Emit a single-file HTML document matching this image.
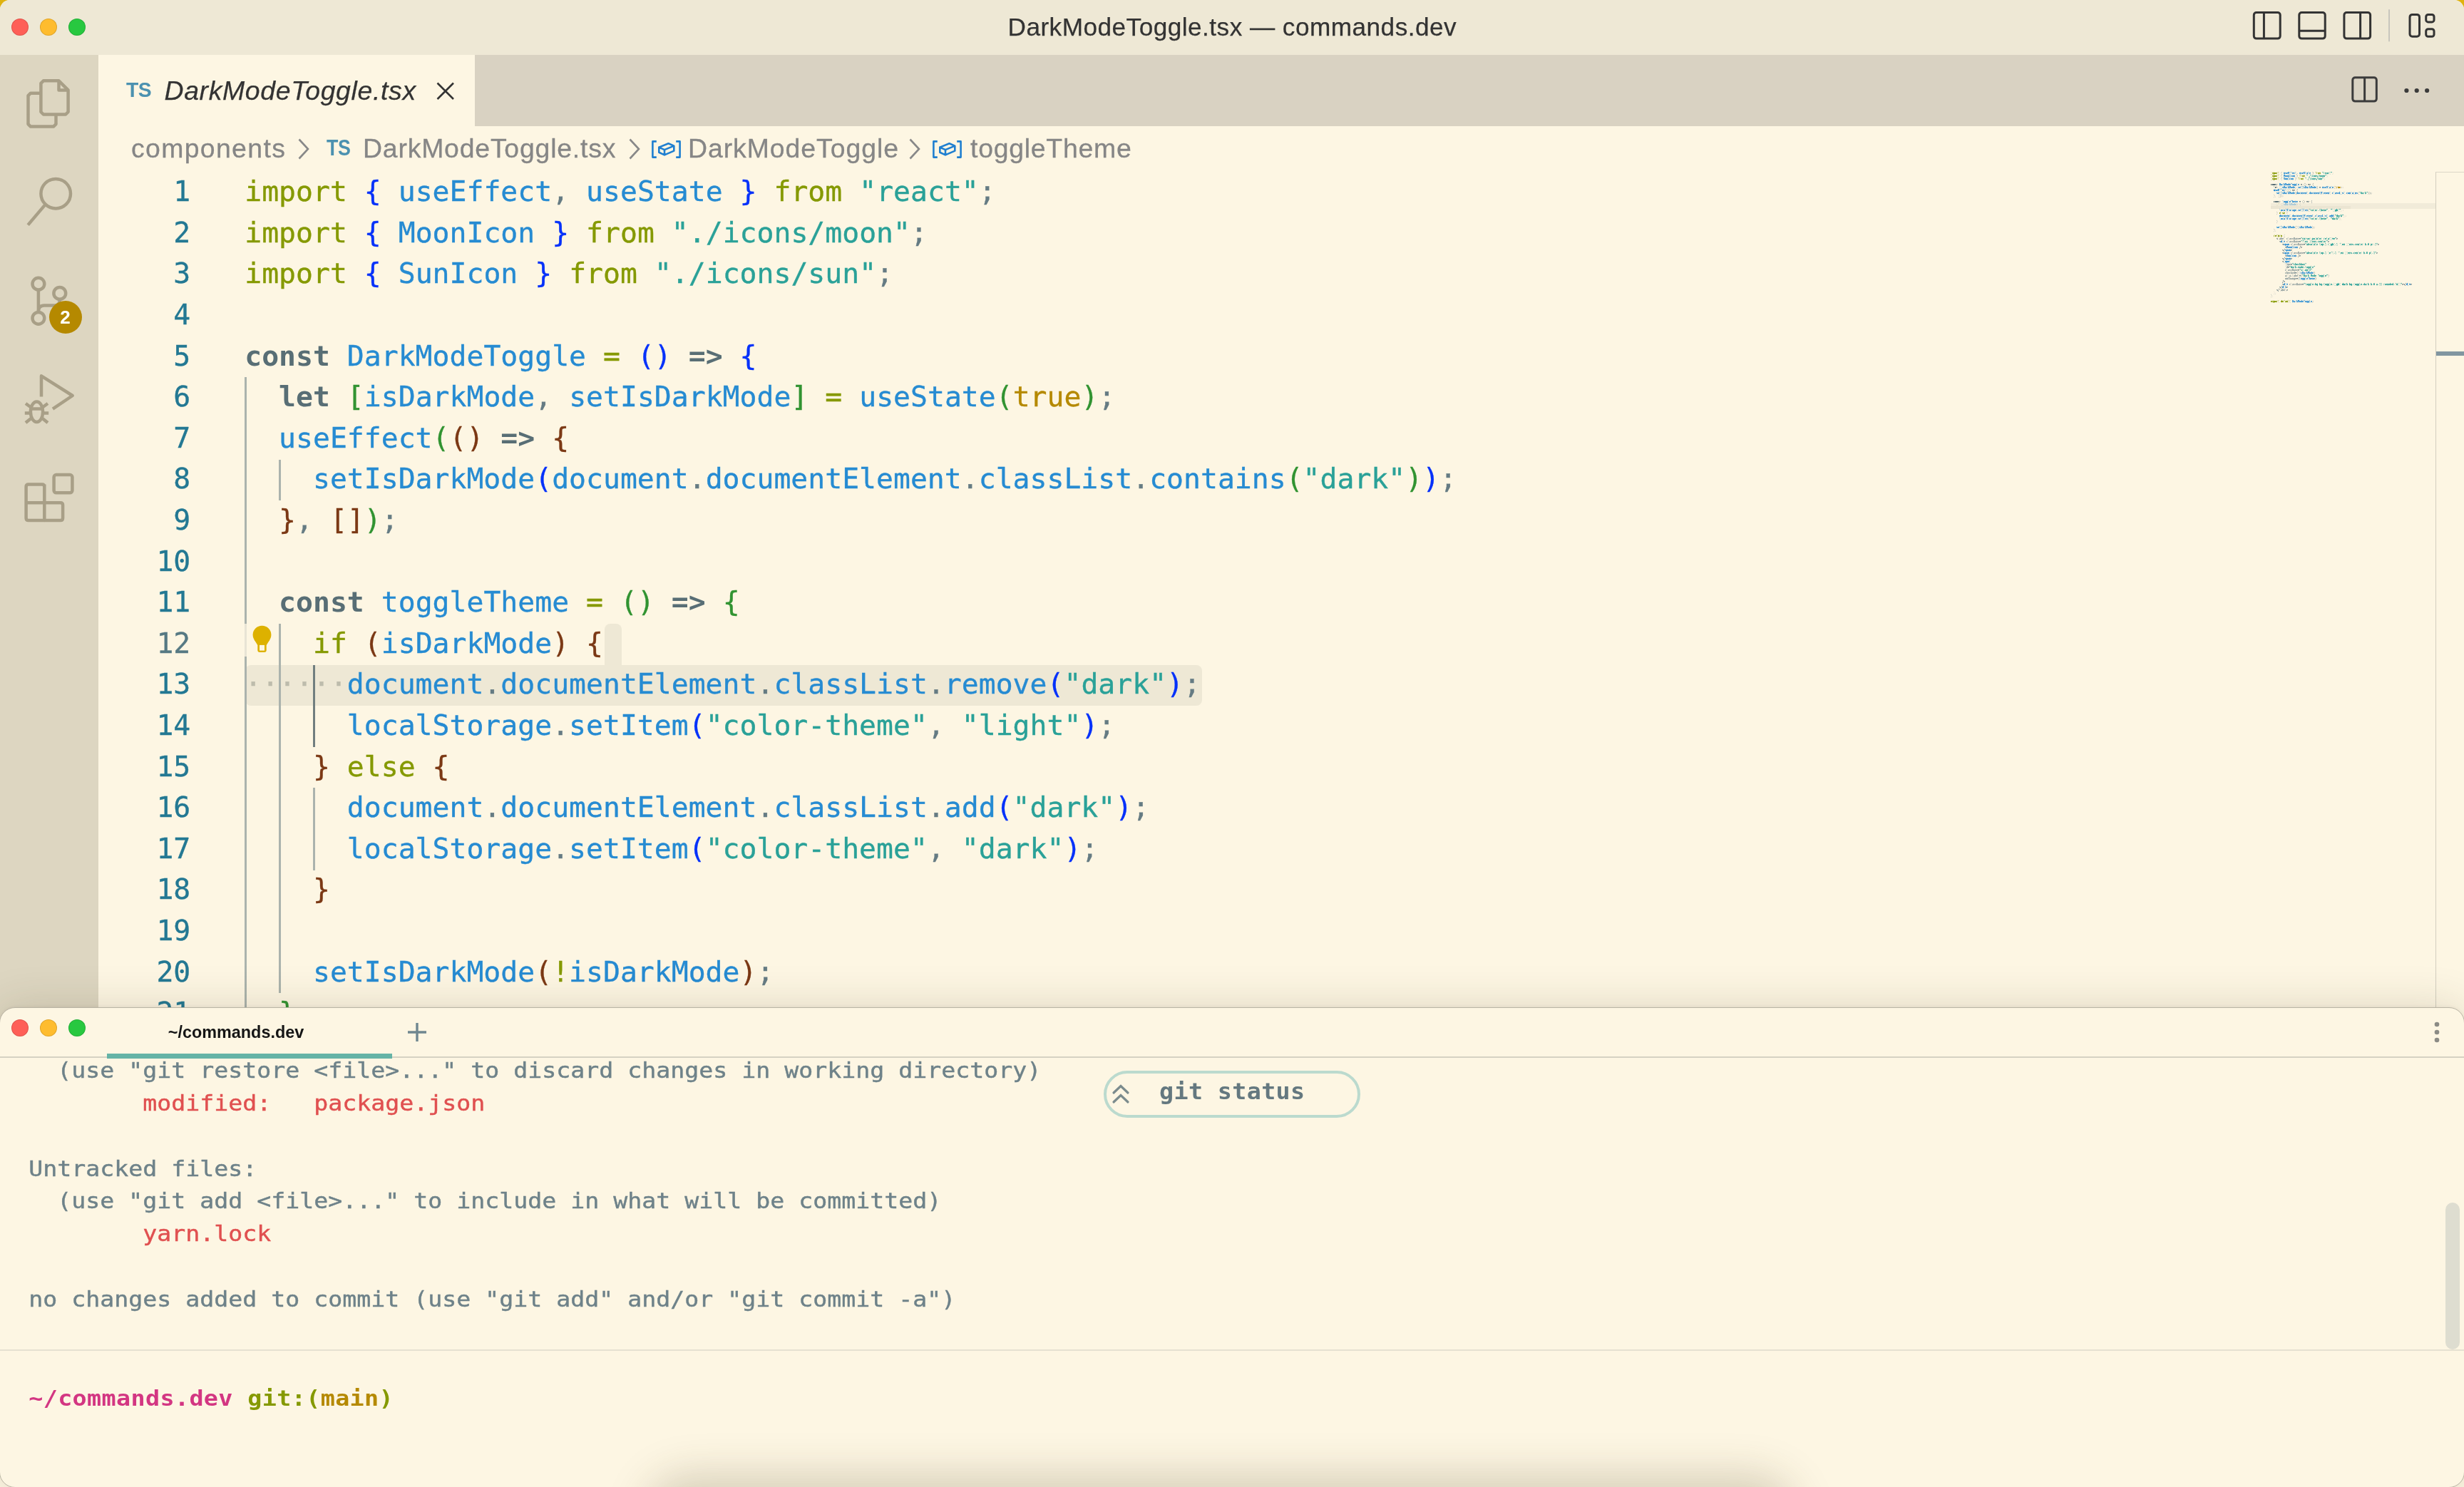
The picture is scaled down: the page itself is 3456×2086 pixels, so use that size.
<!DOCTYPE html>
<html lang="en">
<head>
<meta charset="utf-8">
<title>DarkModeToggle.tsx — commands.dev</title>
<style>
*{box-sizing:border-box;margin:0;padding:0}
html,body{width:3456px;height:2086px;overflow:hidden;background:#b8920f}
body{background:linear-gradient(#dfb20f,#dfb20f 200px,#b8920f 1800px)}
body{position:relative;font-family:"Liberation Sans",sans-serif;color:#333}
.abs{position:absolute}
#root{position:absolute;left:0;top:0;width:3456px;height:2086px;overflow:hidden;will-change:transform}
#vsc{position:absolute;left:0;top:0;width:3456px;height:2086px;background:#fdf6e3;border-radius:14px 14px 0 0;overflow:hidden}
#titlebar{position:absolute;left:0;top:0;width:100%;height:77px;background:#eee8d5}
#title{position:absolute;left:1413.5px;top:0;height:77px;line-height:75px;font-size:35.2px;color:#333;letter-spacing:0.47px;white-space:pre;-webkit-text-stroke:.25px #333}
.tl-dot{position:absolute;width:24px;height:24px;border-radius:50%}
#activity{position:absolute;left:0;top:77px;width:138px;height:1400px;background:#ddd6c1}
#tabs{position:absolute;left:138px;top:77px;right:0;height:100px;background:#d9d2c2}
#tab{position:absolute;left:0;top:0;width:528px;height:100px;background:#fdf6e3}
#tab .ts{position:absolute;left:39px;top:30px;font-size:29.5px;font-weight:bold;color:#4b91b0;line-height:38px;letter-spacing:-0.5px;transform:scaleX(.96);transform-origin:0 50%}
#tab .lbl{position:absolute;left:92.5px;top:27px;font-size:37.4px;font-style:italic;color:#333;line-height:46px;white-space:pre;letter-spacing:.65px;-webkit-text-stroke:.25px #333}
#crumbs{position:absolute;left:138px;top:177px;right:0;height:63px;font-size:37.4px;color:#868686;line-height:63px;white-space:pre;-webkit-text-stroke:.3px #868686}
#crumbs span{position:absolute;top:0}
#crumbs .ts{font-size:30.5px;font-weight:bold;color:#4b91b0;letter-spacing:-0.5px;transform:scaleX(.88);transform-origin:0 50%;-webkit-text-stroke:0;margin-top:-1.5px}
.mono{font-family:"DejaVu Sans Mono","Liberation Mono",monospace}
#editor{position:absolute;left:0;top:0;width:100%;height:100%;font-family:"DejaVu Sans Mono","Liberation Mono",monospace;font-size:39.78px;color:#657b83;-webkit-text-stroke:.35px}
.ln{position:absolute;left:343.2px;height:57.6px;line-height:57.6px;white-space:pre}
.num{position:absolute;left:137.3px;width:130px;height:57.6px;line-height:57.6px;text-align:right;color:#237893}
.num.act{color:#567983}
.k{color:#859900} .o{color:#859900} .s{color:#586e75;font-weight:bold;-webkit-text-stroke:0} .v{color:#268bd2} .str{color:#2aa198}
.c{color:#b58900} .p{color:#657b83} .b1{color:#0431fa} .b2{color:#319331} .b3{color:#7b3814} .ws{color:#bdbcac} .a{color:#93a1a1}
.guide{position:absolute;width:3.2px;background:#abb3ad}
.guide.ga{background:#717e7f;width:2.4px}
.sel{position:absolute;background:#eee8d5}
#minimap{position:absolute;left:3184.5px;top:240.6px;width:600px;transform-origin:0 0;transform:scale(0.3322,0.4);font-family:"DejaVu Sans Mono","Liberation Mono",monospace;font-size:10px;line-height:10px;white-space:pre;color:#657b83;-webkit-text-stroke:.5px}
#minimap .dim{opacity:.4} #minimap .hid{visibility:hidden}
#term{position:absolute;left:-1px;top:1413px;width:3458px;height:673.5px;background:#fdf6e3;border:1.5px solid #b9b4a4;border-radius:22px;box-shadow:0 0 62px rgba(60,50,20,.16),0 -1px 5px rgba(60,50,20,.06)}
.tl{position:absolute;left:40.2px;font-family:"DejaVu Sans Mono","Liberation Mono",monospace;font-size:33.22px;height:45.87px;line-height:45.87px;white-space:pre;color:#6e8289;-webkit-text-stroke:.45px;transform:scaleY(.93);transform-origin:0 34.4px}
.tl.red{color:#e05050}
</style>
</head>
<body>
<div id="root">
<div id="vsc">
  <div id="titlebar">
    <div class="tl-dot" style="left:16px;top:26px;background:#fe5f57;box-shadow:inset 0 0 0 1px rgba(0,0,0,.12)"></div>
    <div class="tl-dot" style="left:56px;top:26px;background:#febc2e;box-shadow:inset 0 0 0 1px rgba(0,0,0,.12)"></div>
    <div class="tl-dot" style="left:96px;top:26px;background:#28c840;box-shadow:inset 0 0 0 1px rgba(0,0,0,.12)"></div>
    <div id="title">DarkModeToggle.tsx — commands.dev</div>
    
<svg class="abs" style="left:3150px;top:0" width="306" height="77" viewBox="3150 0 306 77" fill="none" stroke="#333" stroke-width="3" stroke-linejoin="round">
  <rect x="3161.3" y="17.6" width="36.9" height="36.5" rx="3.5"/><path d="M3175.4 17.6V54.1"/>
  <rect x="3224.8" y="17.6" width="36.4" height="36.5" rx="3.5"/><path d="M3224.8 43.3H3261.2"/>
  <rect x="3287.9" y="17.6" width="36.7" height="36.5" rx="3.5"/><path d="M3310.6 17.6V54.1"/>
  <path d="M3351 13.2V58.2" stroke="#c8c6bd" stroke-width="2"/>
  <rect x="3380" y="20.4" width="13.5" height="30.8" rx="3.5"/>
  <rect x="3402.7" y="20.4" width="11.3" height="10.5" rx="3"/>
  <rect x="3402.7" y="40.8" width="11.3" height="10.4" rx="3"/>
</svg>
  </div>
  <div id="activity">
    
<svg class="abs" style="left:0;top:0" width="138" height="700" viewBox="0 77 138 700" fill="none" stroke="#a89f87" stroke-width="4.5" stroke-linejoin="round" stroke-linecap="butt">
  <!-- files -->
  <path d="M57.4 131V116.8L60.9 113.3H82.5L95.6 126.4V157L92.1 160.5H60.9L57.4 157V131"/>
  <path d="M82.5 113.3V126.4H95.6"/>
  <path d="M57.4 130.7H43L39.5 134.2V174.1L43 177.6H75L78.5 174.1V160.5"/>
  <!-- search -->
  <circle cx="78.2" cy="271.7" r="20.8"/>
  <path d="M63.8 286.6L39.2 315.6"/>
  <!-- source control -->
  <circle cx="53.9" cy="398.2" r="8.4"/>
  <circle cx="83.8" cy="411.4" r="8.4"/>
  <circle cx="53.9" cy="446.3" r="8.4"/>
  <path d="M53.9 406.6V437.9"/>
  <path d="M83.8 419.8V421Q83.8 428.5 76.3 428.5H62Q53.9 428.5 53.9 437"/>
  <!-- debug -->
  <path d="M58 556.5V527.3L101.7 555L74 573.6"/>
  <ellipse cx="51.5" cy="577.8" rx="8.6" ry="14.3"/>
  <path d="M43 573.5H60"/>
  <path d="M34.8 579.5H42.9M60.1 579.5H68.2M36 566L43.5 571.5M67 566L59.5 571.5M36 593L44 586.5M67 593L59 586.5"/>
  <!-- extensions -->
  <path d="M62.3 679.6V730H39.9Q36.6 730 36.6 726.7V682.9Q36.6 679.6 39.9 679.6H59Q62.3 679.6 62.3 682.9"/>
  <path d="M36.6 705.3H84.8Q88.1 705.3 88.1 708.6V726.7Q88.1 730 84.8 730H62.3"/>
  <rect x="75.6" y="666.1" width="25.8" height="25.2" rx="3.3"/>
</svg>
<div class="abs" style="left:68.6px;top:345.2px;width:46px;height:46px;border-radius:50%;background:#b58900;color:#fff;font-weight:bold;font-size:26px;line-height:46px;text-align:center">2</div>

  </div>
  <div id="tabs">
    <div id="tab"><span class="ts">TS</span><span class="lbl">DarkModeToggle.tsx</span><svg class="abs" style="left:472px;top:36px" width="30" height="30" viewBox="0 0 30 30" fill="none" stroke="#333" stroke-width="2.6"><path d="M3.5 3.5L26 26M26 3.5L3.5 26"/></svg></div>
    
<svg class="abs" style="left:3150px;top:20px" width="130" height="60" viewBox="3288 97 130 60" fill="none" stroke="#3b3b3b" stroke-width="3" stroke-linejoin="round">
  <rect x="3299.8" y="108.7" width="33.5" height="33.4" rx="3.5"/><path d="M3316.6 108.7V142.1"/>
  <g fill="#3b3b3b" stroke="none"><circle cx="3375.4" cy="127" r="3.1"/><circle cx="3389.7" cy="127" r="3.1"/><circle cx="3404.1" cy="127" r="3.1"/></g>
</svg>
  </div>
  <div id="crumbs"><span style="left:46px;letter-spacing:1.35px">components</span><svg class="abs" style="left:279.9px;top:16px" width="20" height="32" viewBox="0 0 20 32" fill="none" stroke="#888" stroke-width="2.6" stroke-linejoin="miter"><path d="M1.5 2.5L14 16L1.500 29.5"/></svg><span class="ts" style="left:319.5px">TS</span><span style="left:371px;letter-spacing:.8px">DarkModeToggle.tsx</span><svg class="abs" style="left:743.5px;top:16px" width="20" height="32" viewBox="0 0 20 32" fill="none" stroke="#888" stroke-width="2.6" stroke-linejoin="miter"><path d="M1.5 2.5L14 16L1.500 29.5"/></svg><svg class="abs" style="left:776px;top:19.6px" width="41" height="25" viewBox="0 0 41 25" fill="none" stroke="#1f7fd0" stroke-width="2.6" stroke-linejoin="round">
<path d="M6.8 1.4H1.4V23.6H6.8"/><path d="M34.200 1.4H39.6V23.6H34.200"/>
<path d="M10.3 9.6L23.5 4.2L31.3 7.600V14.6L18 20.4L10.3 16.800V9.6L18 13.100L31.3 7.600M18 13.100V20.4"/></svg><span style="left:827px;letter-spacing:.95px">DarkModeToggle</span><svg class="abs" style="left:1137.4px;top:16px" width="20" height="32" viewBox="0 0 20 32" fill="none" stroke="#888" stroke-width="2.6" stroke-linejoin="miter"><path d="M1.5 2.5L14 16L1.500 29.5"/></svg><svg class="abs" style="left:1170px;top:19.6px" width="41" height="25" viewBox="0 0 41 25" fill="none" stroke="#1f7fd0" stroke-width="2.6" stroke-linejoin="round">
<path d="M6.8 1.4H1.4V23.6H6.8"/><path d="M34.200 1.4H39.6V23.6H34.200"/>
<path d="M10.3 9.6L23.5 4.2L31.3 7.600V14.6L18 20.4L10.3 16.800V9.6L18 13.100L31.3 7.600M18 13.100V20.4"/></svg><span style="left:1223px;letter-spacing:.75px">toggleTheme</span></div>
  <div id="editor">
    
<div class="sel" style="left:847.7px;top:875.0px;width:23.9px;height:57.6px;border-radius:8px 8px 0 0"></div>
<div class="sel" style="left:344.0px;top:932.6px;width:1342.2px;height:57.6px;border-radius:8px"></div>

    <div class="guide" style="left:342.9px;top:529.4px;height:1036.8px"></div><div class="guide" style="left:390.8px;top:644.6px;height:57.6px"></div><div class="guide" style="left:390.8px;top:875.0px;height:518.4px"></div><div class="guide ga" style="left:439.2px;top:932.6px;height:115.2px"></div><div class="guide" style="left:438.7px;top:1105.4px;height:115.2px"></div>
    <div class="abs" style="left:342.9px;top:874.9px;width:3.2px;height:46px;background:#e8e4d5"></div>
    <div class="num" style="top:240.25px">1</div><div class="num" style="top:297.85px">2</div><div class="num" style="top:355.45px">3</div><div class="num" style="top:413.05px">4</div><div class="num" style="top:470.65px">5</div><div class="num" style="top:528.25px">6</div><div class="num" style="top:585.85px">7</div><div class="num" style="top:643.45px">8</div><div class="num" style="top:701.05px">9</div><div class="num" style="top:758.65px">10</div><div class="num" style="top:816.25px">11</div><div class="num act" style="top:873.85px">12</div><div class="num" style="top:931.45px">13</div><div class="num" style="top:989.05px">14</div><div class="num" style="top:1046.65px">15</div><div class="num" style="top:1104.25px">16</div><div class="num" style="top:1161.85px">17</div><div class="num" style="top:1219.45px">18</div><div class="num" style="top:1277.05px">19</div><div class="num" style="top:1334.65px">20</div><div class="num" style="top:1392.25px">21</div><div class="num" style="top:1449.85px">22</div>
    <div class="ln" style="top:240.25px"><span class="k">import</span> <span class="b1">{</span> <span class="v">useEffect</span><span class="p">,</span> <span class="v">useState</span> <span class="b1">}</span> <span class="k">from</span> <span class="str">"react"</span><span class="p">;</span></div><div class="ln" style="top:297.85px"><span class="k">import</span> <span class="b1">{</span> <span class="v">MoonIcon</span> <span class="b1">}</span> <span class="k">from</span> <span class="str">"./icons/moon"</span><span class="p">;</span></div><div class="ln" style="top:355.45px"><span class="k">import</span> <span class="b1">{</span> <span class="v">SunIcon</span> <span class="b1">}</span> <span class="k">from</span> <span class="str">"./icons/sun"</span><span class="p">;</span></div><div class="ln" style="top:413.05px"></div><div class="ln" style="top:470.65px"><span class="s">const</span> <span class="v">DarkModeToggle</span> <span class="o">=</span> <span class="b1">()</span> <span class="s">=&gt;</span> <span class="b1">{</span></div><div class="ln" style="top:528.25px">  <span class="s">let</span> <span class="b2">[</span><span class="v">isDarkMode</span><span class="p">,</span> <span class="v">setIsDarkMode</span><span class="b2">]</span> <span class="o">=</span> <span class="v">useState</span><span class="b2">(</span><span class="c">true</span><span class="b2">)</span><span class="p">;</span></div><div class="ln" style="top:585.85px">  <span class="v">useEffect</span><span class="b2">(</span><span class="b3">()</span> <span class="s">=&gt;</span> <span class="b3">{</span></div><div class="ln" style="top:643.45px">    <span class="v">setIsDarkMode</span><span class="b1">(</span><span class="v">document</span><span class="p">.</span><span class="v">documentElement</span><span class="p">.</span><span class="v">classList</span><span class="p">.</span><span class="v">contains</span><span class="b2">(</span><span class="str">"dark"</span><span class="b2">)</span><span class="b1">)</span><span class="p">;</span></div><div class="ln" style="top:701.05px">  <span class="b3">}</span><span class="p">,</span> <span class="b3">[]</span><span class="b2">)</span><span class="p">;</span></div><div class="ln" style="top:758.65px"></div><div class="ln" style="top:816.25px">  <span class="s">const</span> <span class="v">toggleTheme</span> <span class="o">=</span> <span class="b2">()</span> <span class="s">=&gt;</span> <span class="b2">{</span></div><div class="ln" style="top:873.85px">    <span class="k">if</span> <span class="b3">(</span><span class="v">isDarkMode</span><span class="b3">)</span> <span class="b3">{</span></div><div class="ln" style="top:931.45px"><span class="ws">······</span><span class="v">document</span><span class="p">.</span><span class="v">documentElement</span><span class="p">.</span><span class="v">classList</span><span class="p">.</span><span class="v">remove</span><span class="b1">(</span><span class="str">"dark"</span><span class="b1">)</span><span class="p">;</span></div><div class="ln" style="top:989.05px">      <span class="v">localStorage</span><span class="p">.</span><span class="v">setItem</span><span class="b1">(</span><span class="str">"color-theme"</span><span class="p">,</span> <span class="str">"light"</span><span class="b1">)</span><span class="p">;</span></div><div class="ln" style="top:1046.65px">    <span class="b3">}</span> <span class="k">else</span> <span class="b3">{</span></div><div class="ln" style="top:1104.25px">      <span class="v">document</span><span class="p">.</span><span class="v">documentElement</span><span class="p">.</span><span class="v">classList</span><span class="p">.</span><span class="v">add</span><span class="b1">(</span><span class="str">"dark"</span><span class="b1">)</span><span class="p">;</span></div><div class="ln" style="top:1161.85px">      <span class="v">localStorage</span><span class="p">.</span><span class="v">setItem</span><span class="b1">(</span><span class="str">"color-theme"</span><span class="p">,</span> <span class="str">"dark"</span><span class="b1">)</span><span class="p">;</span></div><div class="ln" style="top:1219.45px">    <span class="b3">}</span></div><div class="ln" style="top:1277.05px"></div><div class="ln" style="top:1334.65px">    <span class="v">setIsDarkMode</span><span class="b3">(</span><span class="o">!</span><span class="v">isDarkMode</span><span class="b3">)</span><span class="p">;</span></div><div class="ln" style="top:1392.25px">  <span class="b2">}</span><span class="p">;</span></div><div class="ln" style="top:1449.85px"></div>
    <svg class="abs" style="left:352px;top:875px" width="32" height="44" viewBox="0 0 32 44" fill="#ddb100">
<circle cx="15.5" cy="15.600" r="12.9"/>
<path d="M4.6 22.5L9.3 30H21.700L26.4 22.500z"/>
<path d="M9.3 28H21.700V37.100Q21.700 40.100 18.700 40.100H12.3Q9.3 40.100 9.3 37.100z"/>
<rect x="12" y="29.9" width="7" height="7.700" fill="#fdf6e3"/>
</svg>
  </div>
  
<div class="abs" style="left:3415.5px;top:240.5px;width:41px;height:1200px;border-left:1.5px solid #d3cebf;border-top:1.5px solid #dcd7c8"></div>
<div class="abs" style="left:3417px;top:493px;width:39px;height:5.5px;background:#8196a0"></div>
<div class="abs" style="left:3184.5px;top:284.6px;width:231px;height:8px;background:#f1ebd9"></div>
<div class="abs" style="left:3184.5px;top:288.6px;width:112px;height:4px;background:#ebe5d2"></div>

  <div id="minimap"><div><span class="k">import</span> <span class="p">{</span> <span class="v">useEffect</span><span class="p">,</span> <span class="v">useState</span> <span class="p">}</span> <span class="k">from</span> <span class="str">"react"</span><span class="p">;</span></div><div><span class="k">import</span> <span class="p">{</span> <span class="v">MoonIcon</span> <span class="p">}</span> <span class="k">from</span> <span class="str">"./icons/moon"</span><span class="p">;</span></div><div><span class="k">import</span> <span class="p">{</span> <span class="v">SunIcon</span> <span class="p">}</span> <span class="k">from</span> <span class="str">"./icons/sun"</span><span class="p">;</span></div><div>&nbsp;</div><div><span class="s">const</span> <span class="v">DarkModeToggle</span> <span class="p">=</span> <span class="p">(</span><span class="p">)</span> <span class="s">=&gt;</span> <span class="p">{</span></div><div>  <span class="s">let</span> <span class="p">[</span><span class="v">isDarkMode</span><span class="p">,</span> <span class="v">setIsDarkMode</span><span class="p">]</span> <span class="p">=</span> <span class="v">useState</span><span class="p">(</span><span class="c">true</span><span class="p">)</span><span class="p">;</span></div><div>  <span class="v">useEffect</span><span class="p">(</span><span class="p">(</span><span class="p">)</span> <span class="s">=&gt;</span> <span class="p">{</span></div><div>    <span class="v">setIsDarkMode</span><span class="p">(</span><span class="v">document</span><span class="p">.</span><span class="v">documentElement</span><span class="p">.</span><span class="v">classList</span><span class="p">.</span><span class="v">contains</span><span class="p">(</span><span class="str">"dark"</span><span class="p">)</span><span class="p">)</span><span class="p">;</span></div><div>  <span class="p">}</span><span class="p">,</span> <span class="p">[</span><span class="p">]</span><span class="p">)</span><span class="p">;</span></div><div>&nbsp;</div><div>  <span class="s">const</span> <span class="v">toggleTheme</span> <span class="p">=</span> <span class="p">(</span><span class="p">)</span> <span class="s">=&gt;</span> <span class="p">{</span></div><div class="dim">    <span class="k">if</span> <span class="p">(</span><span class="v">isDarkMode</span><span class="p">)</span> <span class="p">{</span></div><div class="hid">      <span class="v">document</span><span class="p">.</span><span class="v">documentElement</span><span class="p">.</span><span class="v">classList</span><span class="p">.</span><span class="v">remove</span><span class="p">(</span><span class="str">"dark"</span><span class="p">)</span><span class="p">;</span></div><div>      <span class="v">localStorage</span><span class="p">.</span><span class="v">setItem</span><span class="p">(</span><span class="str">"color-theme"</span><span class="p">,</span> <span class="str">"light"</span><span class="p">)</span><span class="p">;</span></div><div>    <span class="p">}</span> <span class="k">else</span> <span class="p">{</span></div><div>      <span class="v">document</span><span class="p">.</span><span class="v">documentElement</span><span class="p">.</span><span class="v">classList</span><span class="p">.</span><span class="v">add</span><span class="p">(</span><span class="str">"dark"</span><span class="p">)</span><span class="p">;</span></div><div>      <span class="v">localStorage</span><span class="p">.</span><span class="v">setItem</span><span class="p">(</span><span class="str">"color-theme"</span><span class="p">,</span> <span class="str">"dark"</span><span class="p">)</span><span class="p">;</span></div><div>    <span class="p">}</span></div><div>&nbsp;</div><div>    <span class="v">setIsDarkMode</span><span class="p">(</span><span class="p">!</span><span class="v">isDarkMode</span><span class="p">)</span><span class="p">;</span></div><div>  <span class="p">}</span><span class="p">;</span></div><div>&nbsp;</div><div>  <span class="k">return</span> <span class="p">(</span></div><div>    <span class="p">&lt;</span><span class="a">label</span> <span class="a">className</span><span class="p">=</span><span class="str">"cursor-pointer relative"</span><span class="p">&gt;</span></div><div>      <span class="p">&lt;</span><span class="v">div</span> <span class="a">className</span><span class="p">=</span><span class="str">"flex items-center"</span><span class="p">&gt;</span></div><div>        <span class="p">&lt;</span><span class="v">span</span> <span class="a">className</span><span class="p">=</span><span class="str">"absolute top-1 right-1 flex items-center h-6 pr-1"</span><span class="p">&gt;</span></div><div>          <span class="p">&lt;</span><span class="v">MoonIcon</span> <span class="p">/</span><span class="p">&gt;</span></div><div>        <span class="p">&lt;</span><span class="p">/</span><span class="v">span</span><span class="p">&gt;</span></div><div>        <span class="p">&lt;</span><span class="v">span</span> <span class="a">className</span><span class="p">=</span><span class="str">"absolute top-1 left-1 flex items-center h-6 pl-1"</span><span class="p">&gt;</span></div><div>          <span class="p">&lt;</span><span class="v">SunIcon</span> <span class="p">/</span><span class="p">&gt;</span></div><div>        <span class="p">&lt;</span><span class="p">/</span><span class="v">span</span><span class="p">&gt;</span></div><div>        <span class="p">&lt;</span><span class="v">input</span></div><div>          <span class="a">type</span><span class="p">=</span><span class="str">"checkbox"</span></div><div>          <span class="a">id</span><span class="p">=</span><span class="str">"dark-mode-toggle"</span></div><div>          <span class="a">className</span><span class="p">=</span><span class="str">"sr-only"</span></div><div>          <span class="a">checked</span><span class="p">=</span><span class="p">{</span><span class="p">!</span><span class="v">isDarkMode</span><span class="p">}</span></div><div>          <span class="a">aria</span><span class="p">-</span><span class="a">label</span><span class="p">=</span><span class="p">{</span><span class="str">"Dark Mode Toggle"</span><span class="p">}</span></div><div>          <span class="a">onChange</span><span class="p">=</span><span class="p">{</span><span class="v">toggleTheme</span><span class="p">}</span></div><div>        <span class="p">/</span><span class="p">&gt;</span></div><div>        <span class="p">&lt;</span><span class="v">div</span> <span class="a">className</span><span class="p">=</span><span class="str">"toggle-bg bg-toggle-light dark:bg-toggle-dark h-6 w-11 rounded-full"</span><span class="p">&gt;</span><span class="p">&lt;</span><span class="p">/</span><span class="v">div</span><span class="p">&gt;</span></div><div>      <span class="p">&lt;</span><span class="p">/</span><span class="v">div</span><span class="p">&gt;</span></div><div>    <span class="p">&lt;</span><span class="p">/</span><span class="a">label</span><span class="p">&gt;</span></div><div>  <span class="p">)</span><span class="p">;</span></div><div><span class="p">}</span><span class="p">;</span></div><div>&nbsp;</div><div><span class="k">export</span> <span class="k">default</span> <span class="v">DarkModeToggle</span><span class="p">;</span></div></div>
</div>
<div id="term">
</div>

<div class="tl-dot" style="left:16px;top:1430px;background:#fe5f57;box-shadow:inset 0 0 0 1px rgba(0,0,0,.12)"></div>
<div class="tl-dot" style="left:56px;top:1430px;background:#febc2e;box-shadow:inset 0 0 0 1px rgba(0,0,0,.12)"></div>
<div class="tl-dot" style="left:96px;top:1430px;background:#28c840;box-shadow:inset 0 0 0 1px rgba(0,0,0,.12)"></div>
<div class="abs" style="left:0;top:1481.5px;width:3456px;height:2px;background:#d6d2c3"></div>
<div class="abs" style="left:150px;top:1478px;width:400px;height:6.5px;background:#65b3a6"></div>
<div class="abs" id="ttab" style="left:150px;top:1420px;width:362px;height:56px;line-height:56px;text-align:center;font-weight:bold;font-size:23.4px;color:#151515;white-space:pre">~/commands.dev</div>
<svg class="abs" style="left:570px;top:1433px" width="30" height="30" viewBox="0 0 30 30" stroke="#6f8790" stroke-width="3.4" fill="none"><path d="M15 2V28M2 15H28"/></svg>
<svg class="abs" style="left:3410px;top:1428px" width="16" height="40" viewBox="0 0 16 40" fill="#8b8b85"><circle cx="8" cy="9" r="3.3"/><circle cx="8" cy="20" r="3.3"/><circle cx="8" cy="31" r="3.3"/></svg>
<div class="abs" style="left:0;top:1893px;width:3456px;height:1.5px;background:#e6e1d1"></div>
<div class="abs" style="left:3430px;top:1687px;width:20px;height:206px;border-radius:10px;background:#deddd0"></div>
<div class="abs" id="pill" style="left:1548px;top:1501.5px;width:360px;height:66.5px;border:4px solid #bbdace;border-radius:33px;background:#fdf6e3"></div>
<svg class="abs" style="left:1557px;top:1518px" width="30" height="34" viewBox="0 0 30 34" fill="none" stroke="#7b8b8d" stroke-width="3.2" stroke-linecap="round"><path d="M5 15L15 5.5L25 15M5 28L15 18.500L25 28"/></svg>
<div class="abs mono" id="pilltxt" style="left:1626px;top:1508px;height:46px;line-height:46px;font-size:33.4px;font-weight:bold;color:#64787f;white-space:pre;letter-spacing:.35px;transform:scaleY(.94);transform-origin:0 34.5px">git status</div>
<div class="abs mono" id="prompt" style="left:40.2px;top:1938.3px;height:46px;line-height:46px;font-size:33.4px;font-weight:bold;white-space:pre;letter-spacing:.37px;transform:scaleY(.92);transform-origin:0 34.5px"><span style="color:#d33682">~/commands.dev</span> <span style="color:#859900">git:(</span><span style="color:#b58900">main</span><span style="color:#859900">)</span></div>
<div class="abs" style="left:937px;top:2100px;width:1550px;height:60px;border-radius:30px;box-shadow:0 0 60px 30px rgba(70,60,30,.21)"></div>

<div class="tl " style="top:1478.00px">  (use "git restore &lt;file&gt;..." to discard changes in working directory)</div><div class="tl red" style="top:1523.87px">        modified:   package.json</div><div class="tl " style="top:1615.61px">Untracked files:</div><div class="tl " style="top:1661.48px">  (use "git add &lt;file&gt;..." to include in what will be committed)</div><div class="tl red" style="top:1707.35px">        yarn.lock</div><div class="tl " style="top:1799.09px">no changes added to commit (use "git add" and/or "git commit -a")</div>
</div>
</body>
</html>
